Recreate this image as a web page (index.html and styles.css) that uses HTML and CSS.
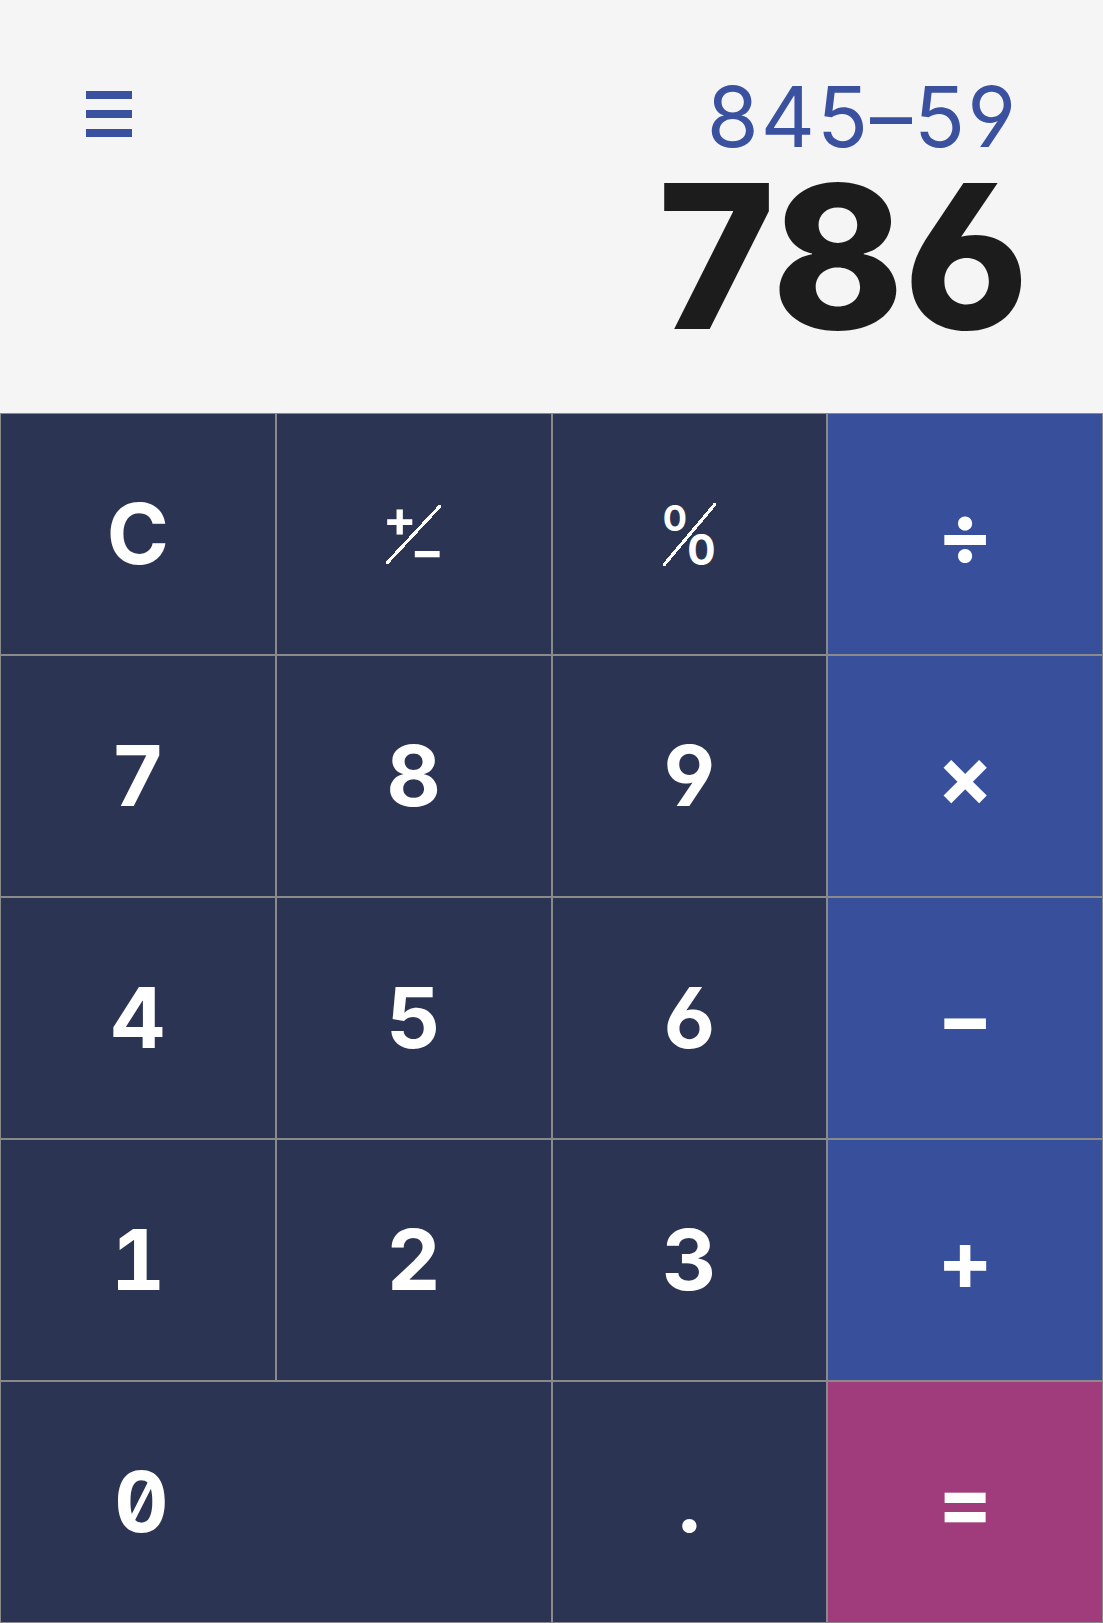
FILE: index.html
```html
<!DOCTYPE html>
<html lang="en">
<head>
<meta charset="utf-8">
<title>Calculator</title>
<link rel="stylesheet" href="styles.css">
</head>
<body>
<main class="calc">
  <section class="display">
    <button class="menu" aria-label="Menu">
      <span class="bar"></span><span class="bar"></span><span class="bar"></span>
    </button>
    <div class="readout">
      <div class="expr">845–59</div>
      <div class="result">786</div>
    </div>
  </section>
  <section class="keys">
    <button class="key num">C</button>
    <button class="key num" aria-label="plus/minus">
      <span class="frac"><span class="fa">+</span><span class="fslash"></span><span class="fb">−</span></span>
    </button>
    <button class="key num" aria-label="percent">
      <span class="frac pct"><span class="fa">0</span><span class="fslash"></span><span class="fb">0</span></span>
    </button>
    <button class="key op div">÷</button>
    <button class="key num">7</button>
    <button class="key num">8</button>
    <button class="key num">9</button>
    <button class="key op mul">×</button>
    <button class="key num">4</button>
    <button class="key num">5</button>
    <button class="key num">6</button>
    <button class="key op sub">−</button>
    <button class="key num">1</button>
    <button class="key num">2</button>
    <button class="key num">3</button>
    <button class="key op add">+</button>
    <button class="key num zero"><span class="zlabel">0</span></button>
    <button class="key num">.</button>
    <button class="key eq">=</button>
  </section>
</main>
</body>
</html>
```
FILE: styles.css
```css
* { box-sizing: border-box; }
html, body { margin: 0; padding: 0; }
body { background: #f5f5f5; }

.calc {
  width: 1103px;
  height: 1623px;
  display: flex;
  flex-direction: column;
}

.display {
  height: 413px;
  background: #f5f5f5;
  display: flex;
  justify-content: space-between;
  align-items: flex-start;
  padding: 0 74px 0 86px;
}

.menu {
  margin-top: 91px;
  padding: 0;
  border: 0;
  background: transparent;
  display: flex;
  flex-direction: column;
  gap: 11px;
  width: 46px;
}
.menu .bar {
  display: block;
  width: 46px;
  height: 8px;
  background: #3a51a0;
}

.readout {
  margin-top: 78px;
  display: flex;
  flex-direction: column;
  align-items: flex-end;
  font-family: Inter, "Liberation Sans", sans-serif;
  font-feature-settings: "cv03", "cv04";
}
.expr {
  font-size: 84px;
  font-weight: 400;
  line-height: 78px;
  letter-spacing: 2px;
  color: #3a51a0;
  margin-right: 11px;
}
.result {
  font-size: 200px;
  font-weight: 800;
  line-height: 200px;
  color: #1c1c1c;
  margin-right: 1px;
  letter-spacing: -1px;
}

.keys {
  flex: 1;
  display: grid;
  grid-template-columns: repeat(4, 1fr);
  grid-template-rows: repeat(5, 1fr);
}

.key {
  border: 1px solid #8a8a8a;
  margin: 0;
  padding: 0;
  color: #fff;
  font-family: Inter, "Liberation Sans", sans-serif;
  font-feature-settings: "tnum", "zero", "cv03", "cv04";
  font-weight: 700;
  font-size: 84px;
  line-height: 1;
  display: flex;
  align-items: center;
  justify-content: center;
}
.num { background: #2c3453; }
.op { background: #38509c; }
.eq { background: #a13c7c; }

.zero {
  grid-column: span 2;
  justify-content: flex-start;
}
.zlabel {
  flex: 0 0 50%;
  text-align: center;
  padding-left: 6px;
}

.frac {
  display: grid;
  grid-template-columns: 27px 28px;
  grid-template-rows: 28px 31px;
  font-size: 50px;
  line-height: 1;
  font-feature-settings: normal;
}
.frac .fa {
  grid-area: 1 / 1;
  display: flex;
  align-items: center;
  justify-content: center;
}
.frac .fb {
  grid-area: 2 / 2;
  display: flex;
  align-items: center;
  justify-content: center;
  padding-top: 5px;
}
.frac .fslash {
  grid-area: 1 / 1 / 3 / 3;
  background: linear-gradient(to bottom right,
    transparent calc(50% - 1.6px), #fff calc(50% - 1.6px),
    #fff calc(50% + 1.6px), transparent calc(50% + 1.6px));
}
.pct {
  grid-template-columns: 24px 29px;
  grid-template-rows: 30px 33px;
  font-size: 36px;
}
.pct .fb { font-size: 42px; padding-top: 2px; }
```
